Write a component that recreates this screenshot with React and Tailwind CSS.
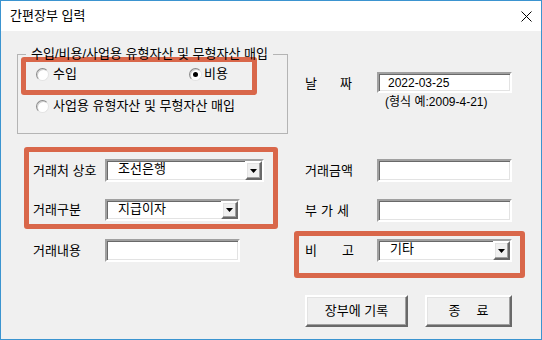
import React from "react";

const sunken =
  "bg-white border-2 border-t-[#a0a0a0] border-l-[#a0a0a0] border-b-white border-r-white shadow-[inset_1px_1px_0_#696969,inset_-1px_-1px_0_#e3e3e3]";
const raised =
  "bg-[#f0f0f0] border-2 border-t-white border-l-white border-b-[#696969] border-r-[#696969] shadow-[inset_-1px_-1px_0_#a0a0a0,inset_1px_1px_0_#e3e3e3]";

const Radio = ({ checked }) => (
  <span className="w-[13px] h-[13px] rounded-full bg-white border border-t-[#8a8a8a] border-l-[#8a8a8a] border-b-[#e3e3e3] border-r-[#e3e3e3] shadow-[inset_1px_1px_0_#cfcfcf] flex items-center justify-center shrink-0">
    {checked && <span className="w-[5px] h-[5px] rounded-full bg-black"></span>}
  </span>
);

const Combo = ({ size, value }) => (
  <div className={`${sunken} ${size} flex items-stretch`}>
    <div className="flex-1 pl-[11px] pb-[3px] flex items-center">{value}</div>
    <div className={`${raised} w-[17px] flex items-center justify-center`}>
      <svg width="7" height="4" viewBox="0 0 7 4">
        <path d="M0 0H7L3.5 4Z" fill="#000" />
      </svg>
    </div>
  </div>
);

const App = () => {
  return (
    <div className="w-[542px] h-[340px] border border-[#3b94d0] flex flex-col text-[13px] leading-4 text-black font-['Liberation_Sans','Noto_Sans_CJK_KR',sans-serif]">
      <div className="h-[30px] bg-white flex items-center justify-between pl-[9px] pr-[9px] shrink-0">
        <span>간편장부 입력</span>
        <svg width="11" height="11" viewBox="0 0 11 11">
          <path d="M0.5 0.5L10.5 10.5M10.5 0.5L0.5 10.5" stroke="#000" strokeWidth="1" />
        </svg>
      </div>

      <div className="flex-1 bg-[#f0f0f0] flex pl-[16px]">
        {/* left column */}
        <div className="w-[271px] flex flex-col">
          <fieldset className="mt-[15px] h-[88px] border border-[#b4b4b4]">
            <legend className="ml-[8px] px-[5px] leading-4">수입/비용/사업용 유형자산 및 무형자산 매입</legend>
            <div className="mt-[-5px] ml-[3px] w-[236px] h-[38px] border-[5px] border-[#d9674a] rounded-[3px]">
              <div className="flex items-center h-[24px] pl-[10px]">
                <div className="w-[153px] flex items-center gap-[4px]">
                  <Radio />
                  <span>수입</span>
                </div>
                <div className="flex items-center gap-[2px]">
                  <Radio checked />
                  <span>비용</span>
                </div>
              </div>
            </div>
            <div className="mt-[2px] h-[18px] ml-[18px] flex items-center gap-[4px]">
              <Radio />
              <span>사업용 유형자산 및 무형자산 매입</span>
            </div>
          </fieldset>

          <div className="mt-[13px] ml-[7px] w-[254px] h-[82px] border-[5px] border-[#d9674a] rounded-[3px] pl-[4px]">
            <div className="mt-[7px] flex items-center">
              <span className="w-[72px]">거래처 상호</span>
              <Combo size="w-[159px] h-[23px]" value="조선은행" />
            </div>
            <div className="mt-[17px] flex items-center">
              <span className="w-[72px]">거래구분</span>
              <Combo size="w-[135px] h-[22px]" value="지급이자" />
            </div>
          </div>

          <div className="mt-[10px] ml-[16px] flex items-center">
            <span className="w-[72px]">거래내용</span>
            <div className={`${sunken} w-[135px] h-[23px]`}></div>
          </div>
        </div>

        {/* right column */}
        <div className="ml-[6px] w-[231px] flex flex-col">
          <div className="mt-[41px] pl-[11px] flex items-center">
            <span className="w-[72px] flex gap-[23px] pt-[3px]">
              <span>날</span>
              <span>짜</span>
            </span>
            <div className={`${sunken} w-[135px] h-[21px] pl-[9px] flex items-center text-[12px]`}>2022-03-25</div>
          </div>
          <div className="mt-[1px] ml-[91px] leading-4 text-[12px]">(형식 예:2009-4-21)</div>

          <div className="mt-[49px] pl-[11px] flex items-center">
            <span className="w-[72px]">거래금액</span>
            <div className={`${sunken} w-[135px] h-[23px]`}></div>
          </div>
          <div className="mt-[17px] pl-[11px] flex items-center">
            <span className="w-[72px] flex gap-[4px]">
              <span>부</span>
              <span>가</span>
              <span>세</span>
            </span>
            <div className={`${sunken} w-[135px] h-[23px]`}></div>
          </div>

          <div className="mt-[9px] w-[231px] h-[47px] border-[5px] border-[#d9674a] rounded-[3px] pl-[6px]">
            <div className="mt-[3px] flex items-center">
              <span className="w-[72px] flex gap-[25px]">
                <span>비</span>
                <span>고</span>
              </span>
              <Combo size="w-[135px] h-[23px]" value="기타" />
            </div>
          </div>

          <div className="mt-[17px] ml-[11px] flex gap-[17px]">
            <button className={`${raised} w-[103px] h-[32px] flex items-center justify-center`}>장부에 기록</button>
            <button className={`${raised} w-[87px] h-[32px] flex items-center justify-center gap-[16px]`}>
              <span>종</span>
              <span>료</span>
            </button>
          </div>
        </div>
      </div>
    </div>
  );
};

export default App;
